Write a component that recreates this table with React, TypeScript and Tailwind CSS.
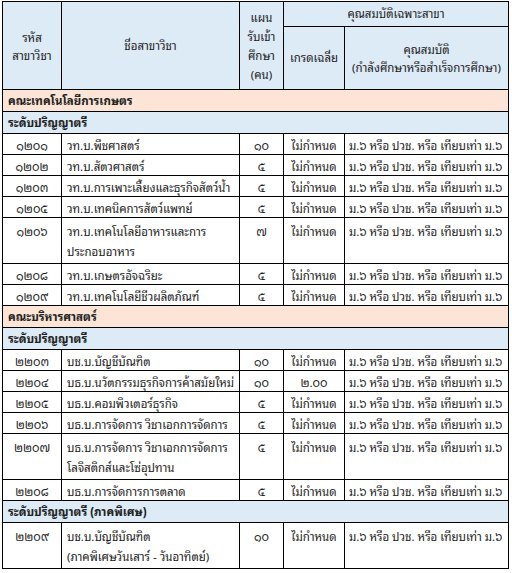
import React from 'react';

type Row =
  | { kind: 'faculty'; label: string }
  | { kind: 'level'; label: string }
  | { kind: 'data'; code: string; name: string[]; seats: string; gpa: string; qual: string };

const QUAL = 'ม.๖ หรือ ปวช. หรือ เทียบเท่า ม.๖';

const rows: Row[] = [
  { kind: 'faculty', label: 'คณะเทคโนโลยีการเกษตร' },
  { kind: 'level', label: 'ระดับปริญญาตรี' },
  { kind: 'data', code: '๑๒๐๑', name: ['วท.บ.พืชศาสตร์'], seats: '๑๐', gpa: 'ไม่กำหนด', qual: QUAL },
  { kind: 'data', code: '๑๒๐๒', name: ['วท.บ.สัตวศาสตร์'], seats: '๕', gpa: 'ไม่กำหนด', qual: QUAL },
  { kind: 'data', code: '๑๒๐๓', name: ['วท.บ.การเพาะเลี้ยงและธุรกิจสัตว์น้ำ'], seats: '๕', gpa: 'ไม่กำหนด', qual: QUAL },
  { kind: 'data', code: '๑๒๐๕', name: ['วท.บ.เทคนิคการสัตว์แพทย์'], seats: '๕', gpa: 'ไม่กำหนด', qual: QUAL },
  { kind: 'data', code: '๑๒๐๖', name: ['วท.บ.เทคโนโลยีอาหารและการ', 'ประกอบอาหาร'], seats: '๗', gpa: 'ไม่กำหนด', qual: QUAL },
  { kind: 'data', code: '๑๒๐๘', name: ['วท.บ.เกษตรอัจฉริยะ'], seats: '๕', gpa: 'ไม่กำหนด', qual: QUAL },
  { kind: 'data', code: '๑๒๐๙', name: ['วท.บ.เทคโนโลยีชีวผลิตภัณฑ์'], seats: '๕', gpa: 'ไม่กำหนด', qual: QUAL },
  { kind: 'faculty', label: 'คณะบริหารศาสตร์' },
  { kind: 'level', label: 'ระดับปริญญาตรี' },
  { kind: 'data', code: '๒๒๐๓', name: ['บช.บ.บัญชีบัณฑิต'], seats: '๑๐', gpa: 'ไม่กำหนด', qual: QUAL },
  { kind: 'data', code: '๒๒๐๔', name: ['บธ.บ.นวัตกรรมธุรกิจการค้าสมัยใหม่'], seats: '๑๐', gpa: '๒.๐๐', qual: QUAL },
  { kind: 'data', code: '๒๒๐๕', name: ['บธ.บ.คอมพิวเตอร์ธุรกิจ'], seats: '๕', gpa: 'ไม่กำหนด', qual: QUAL },
  { kind: 'data', code: '๒๒๐๖', name: ['บธ.บ.การจัดการ วิชาเอกการจัดการ'], seats: '๕', gpa: 'ไม่กำหนด', qual: QUAL },
  { kind: 'data', code: '๒๒๐๗', name: ['บธ.บ.การจัดการ วิชาเอกการจัดการ', 'โลจิสติกส์และโซ่อุปทาน'], seats: '๕', gpa: 'ไม่กำหนด', qual: QUAL },
  { kind: 'data', code: '๒๒๐๘', name: ['บธ.บ.การจัดการการตลาด'], seats: '๕', gpa: 'ไม่กำหนด', qual: QUAL },
  { kind: 'level', label: 'ระดับปริญญาตรี (ภาคพิเศษ)' },
  { kind: 'data', code: '๒๒๐๙', name: ['บช.บ.บัญชีบัณฑิต', '(ภาคพิเศษวันเสาร์ - วันอาทิตย์)'], seats: '๑๐', gpa: 'ไม่กำหนด', qual: QUAL },
];

const cell = 'border border-black align-top whitespace-nowrap overflow-hidden';

export default function App() {
  return (
    <div className="bg-white w-[512px] h-[573px] overflow-hidden pl-[2px] pt-[1px] text-[11.5px] text-[#222] [font-family:'Noto_Sans_Thai_Looped',Tahoma,Loma,'Noto_Sans_Thai','Liberation_Sans',sans-serif]">
      <table className="table-fixed border-collapse w-[506px]">
        <colgroup>
          <col className="w-[59px]" />
          <col className="w-[178px]" />
          <col className="w-[44px]" />
          <col className="w-[61px]" />
          <col className="w-[164px]" />
        </colgroup>
        <thead>
          <tr className="bg-[#ddebf7] h-[25px]">
            <th rowSpan={2} className="border border-black font-normal text-center leading-[18px]">
              รหัส
              <br />
              สาขาวิชา
            </th>
            <th rowSpan={2} className="border border-black font-normal text-center">
              ชื่อสาขาวิชา
            </th>
            <th rowSpan={2} className="border border-black font-normal text-center leading-[19px]">
              แผน
              <br />
              รับเข้า
              <br />
              ศึกษา
              <br />
              (คน)
            </th>
            <th colSpan={2} className="border border-black font-normal text-center">
              คุณสมบัติเฉพาะสาขา
            </th>
          </tr>
          <tr className="bg-[#ddebf7] h-[63px]">
            <th className="border border-black font-normal text-center">เกรดเฉลี่ย</th>
            <th className="border border-black font-normal text-center leading-[18px] whitespace-nowrap">
              คุณสมบัติ
              <br />
              (กำลังศึกษาหรือสำเร็จการศึกษา)
            </th>
          </tr>
        </thead>
        <tbody>
          {rows.map((r, i) => {
            if (r.kind === 'faculty') {
              return (
                <tr key={i} className="bg-[#fce4d6] h-[22px]">
                  <td colSpan={5} className="border border-black px-[5px] font-bold">
                    {r.label}
                  </td>
                </tr>
              );
            }
            if (r.kind === 'level') {
              return (
                <tr key={i} className="bg-[#ddebf7] h-[22px]">
                  <td colSpan={5} className="border border-black px-[5px] pt-[1px] font-bold">
                    {r.label}
                  </td>
                </tr>
              );
            }
            const two = r.name.length > 1;
            const pad = two ? 'pt-[3px] leading-[20px]' : 'pt-[2px] leading-[18px]';
            return (
              <tr key={i} className={two ? 'h-[46px]' : 'h-[21px]'}>
                <td className={`${cell} ${pad} text-center`}>{r.code}</td>
                <td className={`${cell} ${pad} px-[5px]`}>
                  {r.name.map((n, j) => (
                    <div key={j}>{n}</div>
                  ))}
                </td>
                <td className={`${cell} ${pad} text-center`}>{r.seats}</td>
                <td className={`${cell} ${pad} text-center`}>{r.gpa}</td>
                <td className={`${cell} ${pad} px-[4px]`}>{r.qual}</td>
              </tr>
            );
          })}
        </tbody>
      </table>
    </div>
  );
}
